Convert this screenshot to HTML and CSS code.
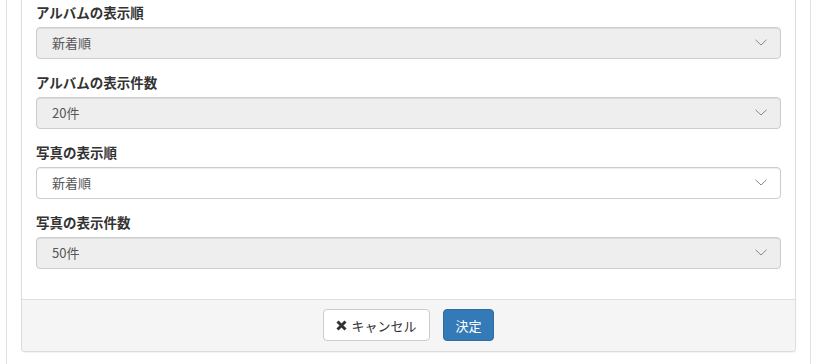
FILE: index.html
```html
<!DOCTYPE html>
<html lang="ja">
<head>
  <meta charset="UTF-8">
  <meta name="viewport" content="width=device-width, initial-scale=1.0">
  <title>表示設定</title>
  <link rel="stylesheet" href="styles.css">
</head>
<body>
  <div class="wrap">
    <div class="panel">
      <div class="panel-body">
        <div class="form-group">
          <label class="label">アルバムの表示順</label>
          <div class="select disabled">
            <span>新着順</span>
            <svg class="chev" width="12" height="7" viewBox="0 0 12 7"><path d="M0.5 0.8 L6 6 L11.5 0.8" fill="none" stroke="#888" stroke-width="1"/></svg>
          </div>
        </div>
        <div class="form-group">
          <label class="label">アルバムの表示件数</label>
          <div class="select disabled">
            <span>20件</span>
            <svg class="chev" width="12" height="7" viewBox="0 0 12 7"><path d="M0.5 0.8 L6 6 L11.5 0.8" fill="none" stroke="#888" stroke-width="1"/></svg>
          </div>
        </div>
        <div class="form-group">
          <label class="label">写真の表示順</label>
          <div class="select">
            <span>新着順</span>
            <svg class="chev" width="12" height="7" viewBox="0 0 12 7"><path d="M0.5 0.8 L6 6 L11.5 0.8" fill="none" stroke="#888" stroke-width="1"/></svg>
          </div>
        </div>
        <div class="form-group">
          <label class="label">写真の表示件数</label>
          <div class="select disabled">
            <span>50件</span>
            <svg class="chev" width="12" height="7" viewBox="0 0 12 7"><path d="M0.5 0.8 L6 6 L11.5 0.8" fill="none" stroke="#888" stroke-width="1"/></svg>
          </div>
        </div>
      </div>
      <div class="panel-footer">
        <button class="btn btn-default">
          <svg class="icon-x" width="11" height="11" viewBox="0 0 11 11"><path d="M1.5 1.5 L9.5 9.5 M9.5 1.5 L1.5 9.5" stroke="#333" stroke-width="3"/></svg>
          キャンセル
        </button>
        <button class="btn btn-primary">決定</button>
      </div>
    </div>
  </div>
</body>
</html>
```

FILE: styles.css
```css
html, body {
  margin: 0;
  padding: 0;
  background: #fff;
}
body {
  font-family: "Noto Sans CJK JP", "Liberation Sans", sans-serif;
  font-size: 13px;
  color: #333;
}
.wrap {
  margin: 0 7px 0 6px;
  border-left: 1px solid #e3e3e3;
  border-right: 1px solid #e3e3e3;
  padding: 0 14px;
  height: 364px;
  box-sizing: border-box;
}
.panel {
  border: 1px solid #ddd;
  border-top: none;
  border-radius: 0 0 4px 4px;
  box-shadow: 0 1px 1px rgba(0, 0, 0, 0.05);
  background: #fff;
}
.panel-body {
  padding: 2px 14px 30px;
}
.form-group {
  margin-bottom: 13px;
}
.form-group:last-child {
  margin-bottom: 0;
}
.label {
  display: block;
  font-weight: bold;
  font-size: 13.5px;
  line-height: 20px;
  margin-bottom: 5px;
  color: #333;
}
.select {
  display: flex;
  align-items: center;
  justify-content: space-between;
  height: 32px;
  box-sizing: border-box;
  border: 1px solid #ccc;
  border-radius: 4px;
  padding: 0 13px 1px 15px;
  color: #555;
  font-size: 13px;
  background: #fff;
  box-shadow: inset 0 1px 1px rgba(0, 0, 0, 0.075);
}
.select.disabled {
  background: #eee;
}
.chev {
  display: block;
}
.panel-footer {
  background: #f5f5f5;
  border-top: 1px solid #ddd;
  border-radius: 0 0 3px 3px;
  padding: 9px 15px 10px;
  display: flex;
  justify-content: center;
  gap: 13px;
}
.btn {
  height: 32px;
  box-sizing: border-box;
  border: 1px solid #ccc;
  border-radius: 4px;
  font-family: inherit;
  font-size: 13px;
  padding: 0;
  display: flex;
  align-items: center;
  justify-content: center;
  white-space: nowrap;
  cursor: pointer;
}
.btn-default {
  background: #fff;
  color: #333;
  width: 107px;
  gap: 4px;
}
.btn-primary {
  background: #337ab7;
  border-color: #2e6da4;
  color: #fff;
  width: 51px;
}
.icon-x {
  display: block;
}
```
